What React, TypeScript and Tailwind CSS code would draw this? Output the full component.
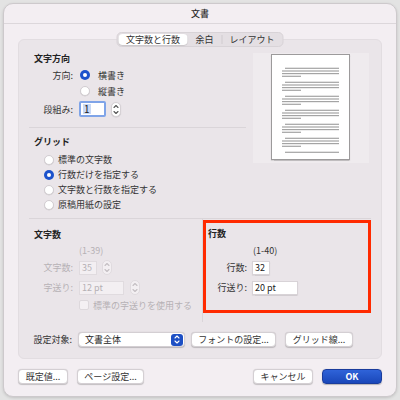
import React from 'react';

const font = "font-['Noto_Sans_CJK_JP','Noto_Sans',sans-serif]";

function Radio({ on }: { on?: boolean }) {
  if (on) {
    return (
      <span className="w-[10px] h-[10px] rounded-full bg-[#1c52cc] flex items-center justify-center shrink-0">
        <span className="w-[4px] h-[4px] rounded-full bg-white" />
      </span>
    );
  }
  return <span className="block w-[10px] h-[10px] rounded-full bg-white border border-[#d2cdd1] shadow-[0_0.5px_0.5px_rgba(0,0,0,0.1)] shrink-0" />;
}

function Stepper({ disabled }: { disabled?: boolean }) {
  const c = disabled ? '#c4bfc3' : '#555';
  return (
    <span
      className={`w-[10px] h-[15px] rounded-[5px] flex items-center justify-center shrink-0 border ${
        disabled ? 'bg-[#f3eff2] border-[#e0dbdf]' : 'bg-white border-[#d6d1d5] shadow-[0_0.5px_1px_rgba(0,0,0,0.15)]'
      }`}
    >
      <svg width="6" height="11" viewBox="0 0 6 11" fill="none" stroke={c} strokeWidth="1.1" strokeLinecap="round" strokeLinejoin="round">
        <path d="M1 3.5 L3 1.5 L5 3.5" />
        <path d="M1 7.5 L3 9.5 L5 7.5" />
      </svg>
    </span>
  );
}

function Btn({ children, className }: { children: React.ReactNode; className?: string }) {
  return (
    <div
      className={`h-[15px] rounded-[4px] bg-white border-[0.5px] border-[#d4cfd3] shadow-[0_0.5px_1px_rgba(0,0,0,0.2)] flex items-center justify-center text-[9px] text-[#333] leading-none ${className ?? ''}`}
    >
      {children}
    </div>
  );
}

function PagePreview() {
  const groups = [0, 1, 2, 3, 4, 5];
  const col = '#a4a4a4';
  return (
    <svg width="77" height="104" viewBox="0 0 77 104">
      {groups.map((g) => {
        const y = 12.7 + g * 14;
        return (
          <g key={g} fill={col}>
            <rect x="13" y={y} width="54" height="1.2" />
            <rect x="10" y={y + 2.7} width="57" height="1.2" />
            <rect x="10" y={y + 5.3} width="57" height="1.2" />
            <rect x="10" y={y + 8} width="19" height="1.2" />
          </g>
        );
      })}
      <rect x="13" y={12.7 + 6 * 14} width="54" height="1.2" fill={col} />
    </svg>
  );
}

export default function App() {
  return (
    <div className={`w-[400px] h-[400px] bg-[#e3e3e3] p-[3px] ${font}`}>
      <div className="h-full rounded-[10px] bg-[#f3eef2] border border-[#cdc9cc] shadow-[0_1px_3px_rgba(0,0,0,0.15)] flex flex-col">
        {/* title bar */}
        <div className="h-[20px] border-b border-[#dcd7db] flex items-center justify-center text-[9px] font-medium text-[#2a2a2a] leading-none">
          文書
        </div>

        {/* main panel */}
        <div className="relative mx-[14px] mt-[15px] h-[320px] rounded-[6px] bg-[#eae5e9] border-[0.5px] border-[#e2dde1] pt-[11px] px-[10px]">
          {/* tabs */}
          <div className="absolute left-1/2 -translate-x-1/2 top-[-8px] w-[167px] h-[15px] rounded-[5px] bg-[#e4dfe3] border-[0.5px] border-[#d8d3d7] p-[1px] flex items-center text-[9px] text-[#333] leading-none">
            <div className="w-[69px] h-full rounded-[4px] bg-white shadow-[0_0.5px_1px_rgba(0,0,0,0.2)] flex items-center justify-center">
              文字数と行数
            </div>
            <div className="w-[34px] h-full flex items-center justify-center">余白</div>
            <div className="w-px h-[9px] bg-[#d0cbcf]" />
            <div className="flex-1 h-full flex items-center justify-center">レイアウト</div>
          </div>

          {/* top section */}
          <div className="flex">
            <div className="w-[217px] flex flex-col text-[9px] leading-none text-[#333]">
              <div className="h-[14px] pl-[5px] flex items-center font-bold text-[#222]">文字方向</div>
              <div className="mt-[2px] h-[16px] flex items-center">
                <span className="w-[44px] text-right">方向:</span>
                <span className="ml-[7px]"><Radio on /></span>
                <span className="ml-[8px]">横書き</span>
              </div>
              <div className="h-[16px] flex items-center">
                <span className="w-[44px]" />
                <span className="ml-[7px]"><Radio /></span>
                <span className="ml-[8px]">縦書き</span>
              </div>
              <div className="mt-[2px] h-[16px] flex items-center">
                <span className="w-[44px] text-right">段組み:</span>
                <span className="ml-[6px] w-[27px] h-[16px] bg-white rounded-[2px] border-[2px] border-[#7fa4e8] flex items-center pl-[2px] text-[10px] text-[#222]">
                  <span className="bg-[#c9d9f5] px-[1px]">1</span>
                </span>
                <span className="ml-[5px]"><Stepper /></span>
              </div>
              <div className="mt-[10px] h-px bg-[#dad5d9]" />
              <div className="mt-[6px] h-[14px] pl-[5px] flex items-center font-bold text-[#222]">グリッド</div>
              <div className="mt-[4px] flex flex-col">
                {[
                  ['標準の文字数', false],
                  ['行数だけを指定する', true],
                  ['文字数と行数を指定する', false],
                  ['原稿用紙の設定', false],
                ].map(([t, on]) => (
                  <div key={t as string} className="h-[15px] pl-[15px] flex items-center">
                    <Radio on={on as boolean} />
                    <span className="ml-[4px]">{t as string}</span>
                  </div>
                ))}
              </div>
            </div>
            <div className="ml-[7px] mt-[2px] w-[116px] h-[110px] bg-[#efebee] pl-[18px] pt-[1px]">
              <div className="w-[79px] h-[106px] bg-white border border-[#9c9a9b] shadow-[0_0.5px_1px_rgba(0,0,0,0.2)]">
                <PagePreview />
              </div>
            </div>
          </div>

          <div className="mt-[6px] h-px bg-[#dad5d9]" />

          {/* bottom section */}
          <div className="flex h-[103px] text-[9px] leading-none">
            <div className="w-[174px] border-r border-[#dad5d9] flex flex-col text-[#b6b1b5]">
              <div className="mt-[8px] h-[14px] pl-[5px] flex items-center font-bold text-[#222]">文字数</div>
              <div className="mt-[3px] h-[13px] pl-[50px] flex items-center">(1-39)</div>
              <div className="mt-[3px] h-[15px] flex items-center">
                <span className="w-[44px] text-right">文字数:</span>
                <span className="ml-[6px] w-[18px] h-[14px] bg-[#f3eff2] border border-[#e0dbdf] flex items-center pl-[2px]">35</span>
                <span className="ml-[5px]"><Stepper disabled /></span>
              </div>
              <div className="mt-[5px] h-[15px] flex items-center">
                <span className="w-[44px] text-right">字送り:</span>
                <span className="ml-[6px] w-[45px] h-[14px] bg-[#f3eff2] border border-[#e0dbdf] flex items-center pl-[2px]">12 pt</span>
                <span className="ml-[6px]"><Stepper disabled /></span>
              </div>
              <div className="mt-[4px] h-[12px] pl-[50px] flex items-center">
                <span className="w-[10px] h-[10px] rounded-[2px] bg-[#f4f0f3] border border-[#ddd8dc]" />
                <span className="ml-[4px]">標準の字送りを使用する</span>
              </div>
            </div>
            <div className="flex-1">
              <div className="mt-[1px] h-[93px] border-[3px] border-[#ff2a00] flex flex-col text-[#333]">
                <div className="mt-[3px] h-[14px] pl-[2px] flex items-center font-bold text-[#222]">行数</div>
                <div className="mt-[4px] h-[13px] pl-[47px] flex items-center">(1-40)</div>
                <div className="mt-[3px] h-[15px] flex items-center">
                  <span className="w-[41px] text-right">行数:</span>
                  <span className="ml-[5px] w-[18px] h-[14px] bg-white border border-[#d8d3d7] shadow-[0_0.5px_1px_rgba(0,0,0,0.1)] flex items-center pl-[2px] text-[#222]">32</span>
                </div>
                <div className="mt-[5px] h-[15px] flex items-center">
                  <span className="w-[41px] text-right">行送り:</span>
                  <span className="ml-[5px] w-[46px] h-[14px] bg-white border border-[#d8d3d7] shadow-[0_0.5px_1px_rgba(0,0,0,0.1)] flex items-center pl-[2px] text-[#222]">20 pt</span>
                </div>
              </div>
            </div>
          </div>

          {/* target row */}
          <div className="mt-[10px] h-[15px] flex items-center text-[9px] leading-none text-[#333]">
            <span className="w-[43px] text-right">設定対象:</span>
            <div className="ml-[6px] w-[107px] h-[15px] rounded-[4px] bg-white border-[0.5px] border-[#d4cfd3] shadow-[0_0.5px_1px_rgba(0,0,0,0.2)] flex items-center pl-[6px] pr-[1px]">
              <span className="flex-1 text-[#222]">文書全体</span>
              <span className="w-[12px] h-[12px] rounded-[3px] bg-[#1d4fc4] flex items-center justify-center">
                <svg width="6" height="9" viewBox="0 0 6 9" fill="none" stroke="white" strokeWidth="1.1" strokeLinecap="round" strokeLinejoin="round">
                  <path d="M1 3 L3 1 L5 3" />
                  <path d="M1 6 L3 8 L5 6" />
                </svg>
              </span>
            </div>
            <Btn className="ml-[6px] w-[85px]">フォントの設定...</Btn>
            <Btn className="ml-[9px] w-[68px]">グリッド線...</Btn>
          </div>
        </div>

        {/* footer buttons */}
        <div className="mx-[14px] mt-[10px] flex items-center">
          <Btn className="w-[50px]">既定値...</Btn>
          <Btn className="ml-[9px] w-[67px]">ページ設定...</Btn>
          <div className="flex-1" />
          <Btn className="w-[60px]">キャンセル</Btn>
          <div className="ml-[9px] w-[60px] h-[15px] rounded-[4px] bg-gradient-to-b from-[#2f63d9] to-[#1a47b9] border-[0.5px] border-[#1a3c9c] shadow-[0_0.5px_1px_rgba(0,0,0,0.25)] flex items-center justify-center text-[9px] font-bold text-white leading-none">
            OK
          </div>
        </div>
      </div>
    </div>
  );
}
